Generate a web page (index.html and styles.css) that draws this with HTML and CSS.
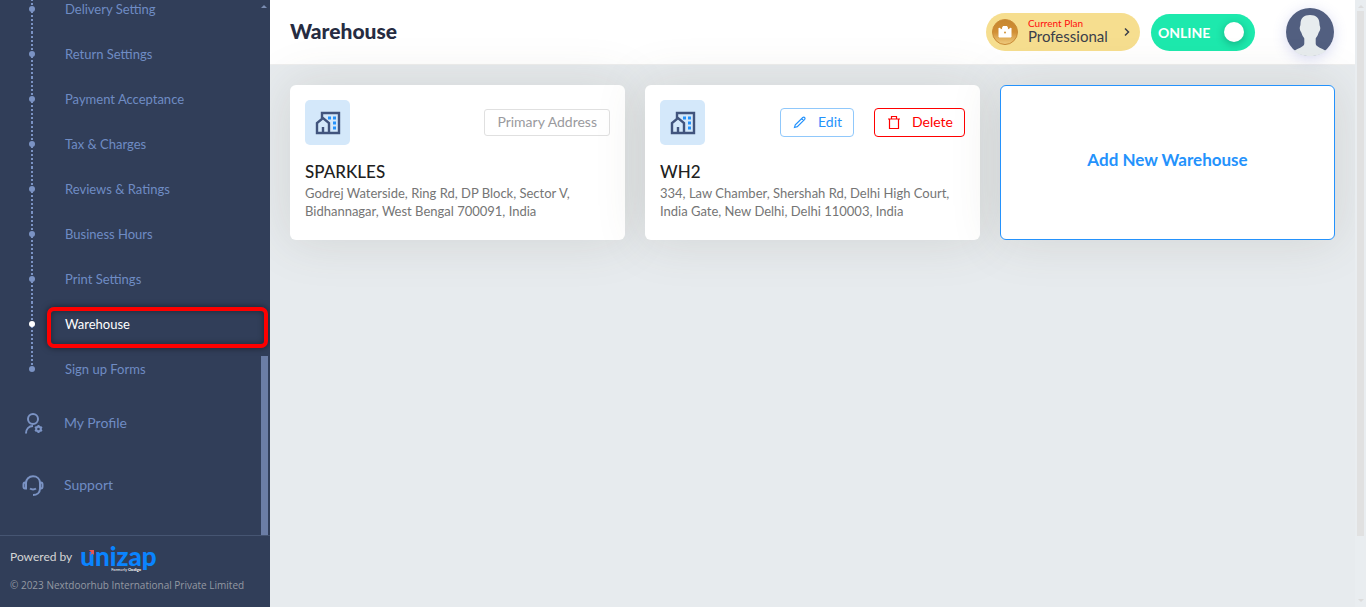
FILE: index.html
```html
<!DOCTYPE html>
<html lang="en">
<head>
<meta charset="utf-8">
<title>Warehouse</title>
<link rel="stylesheet" href="styles.css">
</head>
<body>
<div class="app">
  <aside class="sidebar">
    <nav class="nav" aria-label="Main">
      <ul class="subnav">
        <li class="subnav-item"><a href="#">Delivery Setting</a></li>
        <li class="subnav-item"><a href="#">Return Settings</a></li>
        <li class="subnav-item"><a href="#">Payment Acceptance</a></li>
        <li class="subnav-item"><a href="#">Tax &amp; Charges</a></li>
        <li class="subnav-item"><a href="#">Reviews &amp; Ratings</a></li>
        <li class="subnav-item"><a href="#">Business Hours</a></li>
        <li class="subnav-item"><a href="#">Print Settings</a></li>
        <li class="subnav-item is-active"><a href="#" aria-current="page">Warehouse</a></li>
        <li class="subnav-item"><a href="#">Sign up Forms</a></li>
      </ul>
      <a class="nav-item" href="#">
        <svg class="nav-icon" viewBox="0 0 22 22" aria-hidden="true">
          <circle cx="11" cy="7" r="5"/>
          <path d="M4 21.500c0-4.500 2.800-7.500 7-7.500"/>
          <circle cx="16.500" cy="17" r="2.300"/>
          <path d="M16.500 13v1.500M16.500 19.500V21M13 15l1.300.8M18.700 18.200l1.300.8M13 19l1.300-.8M18.700 15.800l1.300-.8"/>
        </svg>
        My Profile
      </a>
      <a class="nav-item" href="#">
        <svg class="nav-icon" viewBox="0 0 22 22" aria-hidden="true">
          <path d="M4 9C4 5 7 2.300 11 2.300s7 2.700 7 6.700v5.500c0 4-3 6.500-7 6.500"/>
          <path d="M4 8.500H3c-1 0-1.500 1-1.500 2v2c0 1 .5 2 1.500 2h1zM18 8.500h1c1 0 1.500 1 1.500 2v2c0 1-.5 2-1.500 2h-1z"/>
          <path d="M8 14.500c1.500 1.200 4.500 1.200 6 0"/>
        </svg>
        Support
      </a>
      <span class="nav-up" aria-hidden="true"></span>
      <span class="nav-thumb" aria-hidden="true"></span>
    </nav>
    <footer class="sidebar-footer">
      <div class="powered">
        Powered by
        <span class="logo">unizap<svg class="logo-flag" viewBox="0 0 6 6" aria-hidden="true"><path d="M0 0h5v5L3.500 3.500 1 5.500 2.500 2.500z"/></svg><small class="logo-sub">Formerly <b>Oodigo</b></small></span>
      </div>
      <p class="copyright">© 2023 Nextdoorhub International Private Limited</p>
    </footer>
  </aside>

  <div class="page">
    <header class="topbar">
      <h1 class="title">Warehouse</h1>
      <button class="plan" type="button">
        <svg class="plan-icon" viewBox="0 0 26 26" aria-hidden="true">
          <defs><linearGradient id="gold" x1="0" y1="0" x2="0" y2="1"><stop offset="0" stop-color="#c6862f"/><stop offset=".5" stop-color="#d18f35"/><stop offset="1" stop-color="#f0cd80"/></linearGradient></defs>
          <circle cx="13" cy="13" r="12.500" fill="url(#gold)" stroke="#c98a35"/>
          <path d="M7 9l3 2 1-3.500h4l1 3.500 3-2v9H7z" fill="#fff" stroke="#fff" stroke-linejoin="round"/>
          <circle cx="13" cy="13.500" r="1" fill="#d39438"/>
        </svg>
        <span class="plan-text"><span class="plan-label">Current Plan</span><span class="plan-name">Professional</span></span>
        <svg class="plan-arrow" viewBox="0 0 6 10" aria-hidden="true"><path d="M1 1.500L4.500 5 1 8.500"/></svg>
      </button>
      <label class="status">ONLINE<input class="status-input" type="checkbox" role="switch" checked></label>
      <button class="avatar" type="button" aria-label="Account">
        <svg viewBox="0 0 48 48" aria-hidden="true">
          <circle cx="24" cy="24" r="24" fill="#525f80"/>
          <path d="M24 7c6 0 9.500 3 9.500 9 0 2 1 2.500.7 5-.2 2-1.200 2.500-1.700 4-.7 2.500-2 4-2.800 5.500v5c0 3.500 6 4.500 10.300 7.500A24 24 0 0 1 24 48 24 24 0 0 1 8 43c4.300-3 10.300-4 10.300-7.500v-5c-.8-1.500-2.100-3-2.800-5.500-.5-1.500-1.500-2-1.700-4-.3-2.500.7-3 .7-5 0-6 3.500-9 9.500-9z" fill="#e7ecee"/>
        </svg>
      </button>
    </header>

    <main class="cards">
      <article class="card">
        <div class="card-head">
          <span class="card-icon"><svg viewBox="0 0 26 24" aria-hidden="true"><path class="wall" d="M7 8V2h17v20H2V12l6-5 6 5v10M8 22v-6"/><path class="windows" d="M13 5.500h3v3h-3zM18 5.500h3v3h-3zM18 10.500h3v3h-3zM18 15.500h3v3h-3z"/></svg></span>
          <span class="tag">Primary Address</span>
        </div>
        <h2 class="card-title">SPARKLES</h2>
        <p class="card-text">Godrej Waterside, Ring Rd, DP Block, Sector V, Bidhannagar, West Bengal 700091, India</p>
      </article>

      <article class="card">
        <div class="card-head">
          <span class="card-icon"><svg viewBox="0 0 26 24" aria-hidden="true"><path class="wall" d="M7 8V2h17v20H2V12l6-5 6 5v10M8 22v-6"/><path class="windows" d="M13 5.500h3v3h-3zM18 5.500h3v3h-3zM18 10.500h3v3h-3zM18 15.500h3v3h-3z"/></svg></span>
          <div class="actions">
            <button class="btn btn-edit" type="button"><svg viewBox="0 0 14 14" aria-hidden="true"><path d="M1.500 12.500l.8-2.800 7.500-7.200c1.300-1.100 2.900.5 1.900 1.800l-7.400 7.400zM8.700 3.700l1.900 1.900"/></svg>Edit</button>
            <button class="btn btn-delete" type="button"><svg viewBox="0 0 14 14" aria-hidden="true"><path d="M1 4h12M2.500 4v9.500h9V4M4.500 4V1.500h5V4"/></svg>Delete</button>
          </div>
        </div>
        <h2 class="card-title">WH2</h2>
        <p class="card-text">334, Law Chamber, Shershah Rd, Delhi High Court, India Gate, New Delhi, Delhi 110003, India</p>
      </article>

      <button class="card card-add" type="button">Add New Warehouse</button>
    </main>
  </div>
  <div class="scrollbar" aria-hidden="true"><span class="scroll-up"></span><span class="scroll-thumb"></span><span class="scroll-down"></span></div>
</div>
</body>
</html>
```

FILE: styles.css
```css
* { box-sizing: border-box; }

body {
  margin: 0;
  background: #e7ebee;
  color: #212121;
  font-family: Lato, "Open Sans", sans-serif;
}

h1, h2, p, ul { margin: 0; padding: 0; }
a { color: inherit; text-decoration: none; }
button { font-family: inherit; cursor: pointer; }

.app { display: flex; height: 100vh; overflow: hidden; }

/* Sidebar */
.sidebar {
  position: relative;
  z-index: 1;
  flex: 0 0 270px;
  display: flex;
  flex-direction: column;
  background: #313e59;
  color: #6f8cc4;
}

.nav {
  position: relative;
  flex: 1;
  min-height: 0;
  display: flex;
  flex-direction: column;
  justify-content: flex-end;
  padding-bottom: 19px;
  overflow: hidden;
}

.subnav { flex-shrink: 0; list-style: none; font-size: 13px; }

.subnav-item {
  position: relative;
  display: flex;
  align-items: center;
  height: 45px;
  padding: 0 0 2px 65px;
}

.subnav-item::before {
  content: "";
  position: absolute;
  left: 31px;
  top: 0;
  bottom: 0;
  width: 2px;
  background: repeating-linear-gradient(#7b93c4 0 2px, transparent 2px 4px);
}
.subnav-item:last-child::before { bottom: 50%; }

.subnav-item::after {
  content: "";
  position: absolute;
  left: 29px;
  top: 19px;
  width: 6px;
  height: 6px;
  border-radius: 50%;
  background: #7b93c4;
}

.is-active { color: #fff; }
.is-active::after { background: #fff; }
.is-active a::after {
  content: "";
  position: absolute;
  inset: 5px 2px -1px 47px;
  border: 4px solid #fe0000;
  border-radius: 7px;
  box-shadow: 0 0 6px rgba(0, 0, 0, .5), inset 0 0 6px rgba(0, 0, 0, .4);
}

.nav-item {
  display: flex;
  flex-shrink: 0;
  align-items: center;
  gap: 20px;
  height: 62px;
  padding: 0 0 1px 22px;
  font-size: 14px;
}

.nav-icon {
  width: 22px;
  height: 22px;
  fill: none;
  stroke: #7b93c4;
  stroke-width: 2;
}

.nav-up {
  position: absolute;
  top: 5px;
  right: 3px;
  border: 3px solid transparent;
  border-top: 0;
  border-bottom-color: #7b8db3;
}

.nav-thumb {
  position: absolute;
  right: 2px;
  bottom: 0;
  width: 7px;
  height: 179px;
  background: #6b7da5;
}

.sidebar-footer {
  height: 72px;
  padding: 9px 10px;
  border-top: 1px solid #465572;
}

.powered {
  display: flex;
  align-items: center;
  gap: 8px;
  height: 22px;
  color: #d5d5d5;
  font-size: 12px;
}

.logo {
  position: relative;
  color: #0a84ff;
  font-size: 26px;
  font-weight: 900;
  line-height: 22px;
}
.logo-flag { position: absolute; left: 9px; top: 5px; width: 6px; height: 6px; fill: #ef5350; }
.logo-sub {
  position: absolute;
  left: 31px;
  top: 22px;
  color: #fff;
  font-size: 4px;
  font-weight: 400;
  line-height: 5px;
  white-space: nowrap;
}

.copyright {
  margin-top: 10px;
  color: #9499a2;
  font-family: "Open Sans", sans-serif;
  font-size: 10px;
  line-height: 16px;
  white-space: nowrap;
}

/* Page */
.page { flex: 1; min-width: 0; }

.topbar {
  display: flex;
  align-items: center;
  height: 65px;
  padding: 0 21px 0 20px;
  background: #fff;
  border-bottom: 1px solid #eee;
}

.title { flex: 1; padding-bottom: 2px; color: #262c42; font-size: 21px; font-weight: 900; line-height: 28px; }

.plan {
  display: flex;
  align-items: center;
  width: 154px;
  height: 38px;
  margin-right: 11px;
  padding: 0 10px 0 6px;
  border: 0;
  border-radius: 19px;
  background: #f6de8f;
  text-align: left;
}
.plan-icon { width: 26px; height: 26px; }
.plan-text { display: flex; flex: 1; flex-direction: column; margin-left: 10px; padding-bottom: 4px; }
.plan-label { color: #ff0d0d; font-size: 10px; line-height: 12px; }
.plan-name { color: #3b3f4a; font-size: 15px; line-height: 14px; }
.plan-arrow { width: 6px; height: 10px; fill: none; stroke: #3b3f4a; stroke-width: 1.5; }

.status {
  display: flex;
  align-items: center;
  justify-content: space-between;
  width: 104px;
  height: 37px;
  margin-right: 31px;
  padding: 0 11px 0 7px;
  border-radius: 19px;
  background: #1de9ad;
  color: #fff;
  font-size: 14px;
  font-weight: 700;
}
.status-input {
  appearance: none;
  width: 20px;
  height: 20px;
  margin: 0;
  border-radius: 50%;
  background: #fff;
  box-shadow: 0 2px 8px rgba(0, 0, 0, .25);
}

.avatar {
  width: 48px;
  height: 48px;
  padding: 0;
  border: 0;
  border-radius: 50%;
  background: none;
  box-shadow: 0 3px 14px rgba(80, 90, 200, .22);
}
.avatar svg { display: block; width: 100%; }

.cards {
  display: grid;
  grid-template-columns: repeat(3, 1fr);
  gap: 20px;
  padding: 20px;
}

.card {
  min-height: 155px;
  padding: 15px;
  border-radius: 6px;
  background: #fff;
  box-shadow: 0 0 50px rgba(90, 80, 60, .15);
}

.card-head { display: flex; align-items: center; justify-content: space-between; height: 45px; }

.card-icon {
  display: grid;
  place-items: center;
  width: 45px;
  height: 45px;
  border-radius: 5px;
  background: #d4e8fa;
}
.card-icon svg { width: 26px; height: 24px; }
.wall { fill: none; stroke: #41547d; stroke-width: 2.4; }
.windows { fill: #2492fc; }

.tag {
  padding: 0 12px 2px;
  border: 1px solid #e0e0e0;
  border-radius: 3px;
  color: #9a9a9e;
  font-size: 14px;
  line-height: 23px;
}

.actions { display: flex; gap: 20px; }

.btn {
  display: flex;
  align-items: center;
  gap: 11px;
  height: 29px;
  padding: 0 11px 2px 12px;
  border: 1px solid;
  border-radius: 4px;
  background: #fff;
  font-size: 14px;
}
.btn svg { width: 14px; height: 14px; fill: none; stroke: currentColor; stroke-width: 1.2; }
.btn-edit { border-color: #90c8fb; color: #2492fc; }
.btn-delete { border-color: #f00; color: #f00; }

.card-title { margin-top: 15px; font-size: 17px; font-weight: 500; line-height: 24px; }
.card-text { color: #757575; font-size: 13px; line-height: 18px; }

.card-add {
  padding-bottom: 21px;
  border: 1px solid #2492fc;
  color: #2492fc;
  font-size: 17px;
  font-weight: 700;
}

/* Page scrollbar */
.scrollbar {
  display: flex;
  flex: 0 0 11px;
  flex-direction: column;
  align-items: center;
  padding: 5px 0;
  background: #e9edf0;
}
.scroll-up, .scroll-down { border: 3px solid transparent; }
.scroll-up { border-top: 0; border-bottom-color: #dcdcdc; }
.scroll-down { margin-top: auto; border-bottom: 0; border-top-color: #dcdcdc; }
.scroll-thumb { width: 7px; height: 88%; margin-top: 3px; background: #e1e1e1; }
```
